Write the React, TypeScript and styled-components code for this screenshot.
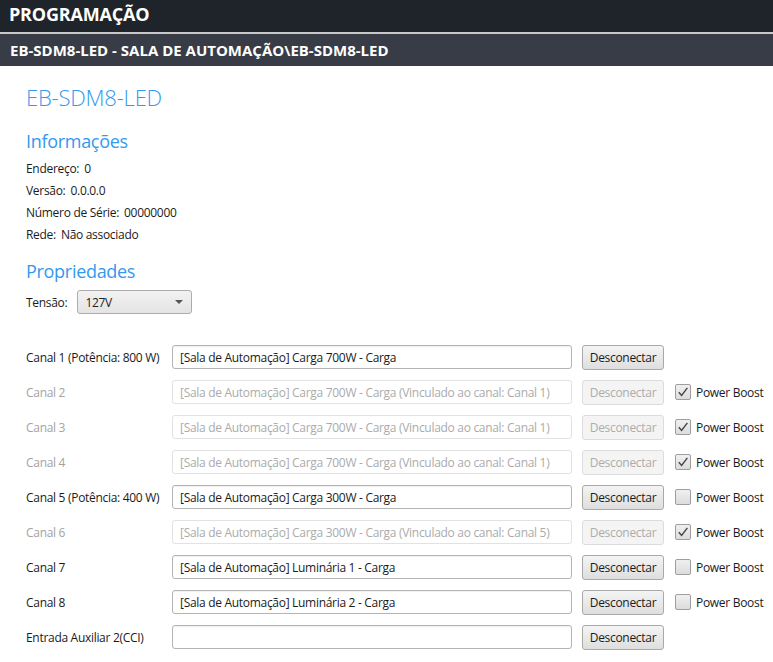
import React from "react";
import styled, { createGlobalStyle } from "styled-components";

const Global = createGlobalStyle`
  html, body { margin: 0; padding: 0; background: #ffffff; }
  body { font-family: "Open Sans", "Noto Sans", sans-serif; font-size: 12px; color: #1b1b1b; }
  * { box-sizing: border-box; }
`;

const Page = styled.div`
  width: 773px;
  min-height: 662px;
  background: #fff;
  overflow: hidden;
`;

const TopBar = styled.div`
  height: 32px;
  background: #1f232a;
  color: #fff;
  font-weight: 700;
  font-size: 18px;
  line-height: 28px;
  padding-left: 9px;
  letter-spacing: -0.2px;
`;

const Divider = styled.div`
  height: 2px;
  background: #c8c8c8;
`;

const PathBar = styled.div`
  height: 32px;
  background: #373c47;
  color: #fff;
  font-weight: 700;
  font-size: 15px;
  line-height: 32px;
  padding-left: 10px;
  letter-spacing: 0;
`;

const Content = styled.div`
  padding: 15px 0 0 26px;
  display: flex;
  flex-direction: column;
`;

const Title = styled.h1`
  margin: 0;
  font-weight: 300;
  font-size: 22px;
  line-height: 32px;
  color: #3399ee;
  letter-spacing: -0.2px;
`;

const Section = styled.h2<{ $top: number }>`
  margin: ${(p) => p.$top}px 0 0 0;
  font-weight: 400;
  font-size: 18px;
  line-height: 24px;
  color: #3399ee;
  letter-spacing: -0.3px;
`;

const InfoList = styled.div`
  margin-top: 5px;
  display: flex;
  flex-direction: column;
`;

const InfoLine = styled.div`
  height: 22px;
  line-height: 22px;
  display: flex;
  gap: 5px;
  letter-spacing: -0.3px;
`;

const FieldRow = styled.div`
  margin-top: 7px;
  display: flex;
  align-items: center;
  gap: 10px;
  height: 24px;
  letter-spacing: -0.3px;
`;

const Select = styled.div`
  width: 115px;
  height: 24px;
  border: 1px solid #acacac;
  border-radius: 3px;
  background: linear-gradient(#f2f2f2, #e4e4e4);
  display: flex;
  align-items: center;
  justify-content: space-between;
  padding: 0 8px 0 7px;
  color: #222;
`;

const Caret = styled.span`
  width: 0;
  height: 0;
  border-left: 4px solid transparent;
  border-right: 4px solid transparent;
  border-top: 4px solid #555;
`;

const Channels = styled.div`
  margin-top: 31px;
  display: flex;
  flex-direction: column;
  gap: 11px;
`;

const Row = styled.div`
  display: flex;
  align-items: center;
  height: 24px;
  letter-spacing: -0.3px;
`;

const Label = styled.div<{ $disabled?: boolean }>`
  width: 146px;
  color: ${(p) => (p.$disabled ? "#a3a3a3" : "#1b1b1b")};
  white-space: nowrap;
`;

const Input = styled.div<{ $disabled?: boolean }>`
  width: 400px;
  height: 24px;
  border: 1px solid ${(p) => (p.$disabled ? "#e2e2e2" : "#b4b4b4")};
  border-radius: 3px;
  background: #fff;
  box-shadow: ${(p) => (p.$disabled ? "none" : "inset 0 1px 1px rgba(0,0,0,0.06)")};
  color: ${(p) => (p.$disabled ? "#ababab" : "#1b1b1b")};
  padding: 0 7px;
  display: flex;
  align-items: center;
  white-space: nowrap;
  overflow: hidden;
`;

const Button = styled.button<{ $disabled?: boolean }>`
  margin-left: 10px;
  width: 82px;
  height: 25px;
  font-family: inherit;
  font-size: 12px;
  letter-spacing: -0.3px;
  border-radius: 3px;
  border: 1px solid ${(p) => (p.$disabled ? "#dcdcdc" : "#a9a9a9")};
  background: ${(p) => (p.$disabled ? "#f4f4f4" : "linear-gradient(#f4f4f4, #dedede)")};
  color: ${(p) => (p.$disabled ? "#acacac" : "#1b1b1b")};
  padding: 0;
  cursor: default;
`;

const Boost = styled.label`
  margin-left: 11px;
  display: flex;
  align-items: center;
  gap: 5px;
  color: #1b1b1b;
`;

const Box = styled.span`
  width: 16px;
  height: 16px;
  border: 1px solid #9e9e9e;
  border-radius: 2px;
  background: linear-gradient(#f0f0f0, #dcdcdc);
  display: flex;
  align-items: center;
  justify-content: center;
`;

type Channel = {
  label: string;
  value: string;
  disabled?: boolean;
  boost?: boolean | null;
};

const channels: Channel[] = [
  { label: "Canal 1 (Potência: 800 W)", value: "[Sala de Automação] Carga 700W - Carga", boost: null },
  { label: "Canal 2", value: "[Sala de Automação] Carga 700W - Carga (Vinculado ao canal: Canal 1)", disabled: true, boost: true },
  { label: "Canal 3", value: "[Sala de Automação] Carga 700W - Carga (Vinculado ao canal: Canal 1)", disabled: true, boost: true },
  { label: "Canal 4", value: "[Sala de Automação] Carga 700W - Carga (Vinculado ao canal: Canal 1)", disabled: true, boost: true },
  { label: "Canal 5 (Potência: 400 W)", value: "[Sala de Automação] Carga 300W - Carga", boost: false },
  { label: "Canal 6", value: "[Sala de Automação] Carga 300W - Carga (Vinculado ao canal: Canal 5)", disabled: true, boost: true },
  { label: "Canal 7", value: "[Sala de Automação] Luminária 1 - Carga", boost: false },
  { label: "Canal 8", value: "[Sala de Automação] Luminária 2 - Carga", boost: false },
  { label: "Entrada Auxiliar 2(CCI)", value: "", boost: null },
];

const Check = () => (
  <svg width="12" height="12" viewBox="0 0 12 12">
    <path d="M1.8 6.2 L4.6 9.4 L10.4 1.8" fill="none" stroke="#444" strokeWidth="1.4" />
  </svg>
);

export default function App() {
  return (
    <Page>
      <Global />
      <TopBar>PROGRAMAÇÃO</TopBar>
      <Divider />
      <PathBar>EB-SDM8-LED - SALA DE AUTOMAÇÃO\EB-SDM8-LED</PathBar>
      <Content>
        <Title>EB-SDM8-LED</Title>
        <Section $top={16}>Informações</Section>
        <InfoList>
          <InfoLine><span>Endereço:</span><span>0</span></InfoLine>
          <InfoLine><span>Versão:</span><span>0.0.0.0</span></InfoLine>
          <InfoLine><span>Número de Série:</span><span>00000000</span></InfoLine>
          <InfoLine><span>Rede:</span><span>Não associado</span></InfoLine>
        </InfoList>
        <Section $top={13}>Propriedades</Section>
        <FieldRow>
          <span>Tensão:</span>
          <Select>
            <span>127V</span>
            <Caret />
          </Select>
        </FieldRow>
        <Channels>
          {channels.map((c) => (
            <Row key={c.label}>
              <Label $disabled={c.disabled}>{c.label}</Label>
              <Input $disabled={c.disabled}>{c.value}</Input>
              <Button $disabled={c.disabled}>Desconectar</Button>
              {c.boost !== null && c.boost !== undefined && (
                <Boost>
                  <Box>{c.boost && <Check />}</Box>
                  <span>Power Boost</span>
                </Boost>
              )}
            </Row>
          ))}
        </Channels>
      </Content>
    </Page>
  );
}
